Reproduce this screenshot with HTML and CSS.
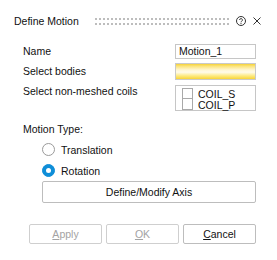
FILE: index.html
```html
<!DOCTYPE html>
<html lang="en">

<head>
	<meta charset="UTF-8">
	<meta name="viewport" content="width=device-width, initial-scale=1.0">
	<title>Define Motion</title>
	<link rel="stylesheet" href="styles.css">
</head>

<body>
	<div class="dialog">
		<!-- Barra de título -->
		<div class="titlebar">
			<span class="title">Define Motion</span>
			<span class="grip"></span>
			<svg class="help" width="10" height="10" viewBox="0 0 10 10">
				<circle cx="5" cy="5" r="4.5" fill="none" stroke="#333" stroke-width="1"/>
				<path d="M3.6 4 A1.4 1.4 0 1 1 5.7 5.2 C5.1 5.5 5 5.8 5 6.3" fill="none" stroke="#333" stroke-width="1"/>
				<circle cx="5" cy="7.6" r="0.6" fill="#333"/>
			</svg>
			<svg class="close" width="8" height="8" viewBox="0 0 8 8">
				<path d="M0.5 0.5 L7.5 7.5 M7.5 0.5 L0.5 7.5" stroke="#333" stroke-width="1"/>
			</svg>
		</div>

		<!-- Campos -->
		<div class="fields">
			<span class="label">Name</span>
			<div class="input">Motion_1</div>

			<span class="label">Select bodies</span>
			<div class="picker"></div>

			<span class="label top">Select non-meshed coils</span>
			<div class="list">
				<div class="item"><span class="check"></span>COIL_S</div>
				<div class="item"><span class="check"></span>COIL_P</div>
			</div>
		</div>

		<!-- Tipo de movimiento -->
		<div class="motion">
			<div class="caption">Motion Type:</div>
			<div class="options">
				<div class="radio"><span class="dot"></span>Translation</div>
				<div class="radio checked"><span class="dot"></span>Rotation</div>
				<button class="axis" type="button">Define/Modify Axis</button>
			</div>
		</div>

		<div class="actions">
			<button type="button" disabled><u>A</u>pply</button>
			<button type="button" disabled><u>O</u>K</button>
			<button type="button"><u>C</u>ancel</button>
		</div>
	</div>
</body>

</html>
```

FILE: styles.css
```css
body {
	font-family: "Liberation Sans", Arial, sans-serif;
	font-size: 10.5px;
	color: #111;
	margin: 0;
	background-color: #fff;
}

.dialog {
	width: 277px;
	height: 260px;
}

.titlebar {
	display: flex;
	align-items: center;
	height: 42px;
	padding-left: 14px;
}

.title {
	width: 65px;
	white-space: nowrap;
}

.grip {
	width: 136px;
	height: 7px;
	margin-left: 14px;
	background-image: linear-gradient(90deg, #fff 2px, transparent 2px), linear-gradient(#bdbdbd 2px, #fff 2px);
	background-size: 4px 5px;
}

.help {
	margin-left: 7px;
}

.close {
	margin-left: 7px;
}

.fields {
	display: grid;
	grid-template-columns: 152px 81px;
	row-gap: 4px;
	padding: 2px 0 0 23px;
}

.label {
	align-self: center;
	line-height: 13px;
}

.label.top {
	align-self: start;
	margin-top: 1px;
}

.input {
	box-sizing: border-box;
	height: 15px;
	line-height: 13px;
	padding-left: 3px;
	border: 1px solid #c6c6c6;
}

.picker {
	box-sizing: border-box;
	height: 17px;
	border: 1px solid #c9c9c9;
	background: linear-gradient(#f5d23a 0%, #fbe47c 15%, #fff7d4 40%, #fffbea 55%, #fde97c 80%, #f8d43a 100%);
}

.list {
	box-sizing: border-box;
	height: 26px;
	margin-top: 1px;
	padding: 2px 0 0 6px;
	border: 1px solid #c6c6c6;
}

.item {
	display: flex;
	align-items: center;
	height: 11px;
}

.check {
	box-sizing: border-box;
	width: 11px;
	height: 11px;
	margin-right: 5px;
	border: 1px solid #a9a9a9;
}

.item + .item .check {
	border-top: none;
}

.motion {
	padding: 0 21px 0 23px;
}

.caption {
	line-height: 13px;
	margin-top: 12px;
}

.options {
	margin-left: 19px;
	margin-top: 3px;
}

.radio {
	display: flex;
	align-items: center;
	height: 21px;
}

.dot {
	box-sizing: border-box;
	position: relative;
	width: 13px;
	height: 13px;
	margin-right: 6px;
	border: 1px solid #9a9a9a;
	border-radius: 50%;
	background: #fff;
}

.radio.checked .dot {
	border-color: #0f8ed8;
	background: #0f8ed8;
}

.radio.checked .dot::after {
	content: "";
	position: absolute;
	left: 3px;
	top: 3px;
	width: 5px;
	height: 5px;
	border-radius: 50%;
	background: #fff;
}

button {
	font-family: inherit;
	font-size: inherit;
	color: #111;
	background: #fff;
	border: 1px solid #bdbdbd;
	border-radius: 2px;
	padding: 0;
}

.axis {
	display: block;
	width: 214px;
	height: 22px;
}

.actions {
	display: flex;
	gap: 4px;
	margin-top: 21px;
	padding-left: 29px;
}

.actions button {
	width: 73px;
	height: 20px;
}

.actions button:disabled {
	color: #a3a3a3;
	border-color: #cfcfcf;
}
```
